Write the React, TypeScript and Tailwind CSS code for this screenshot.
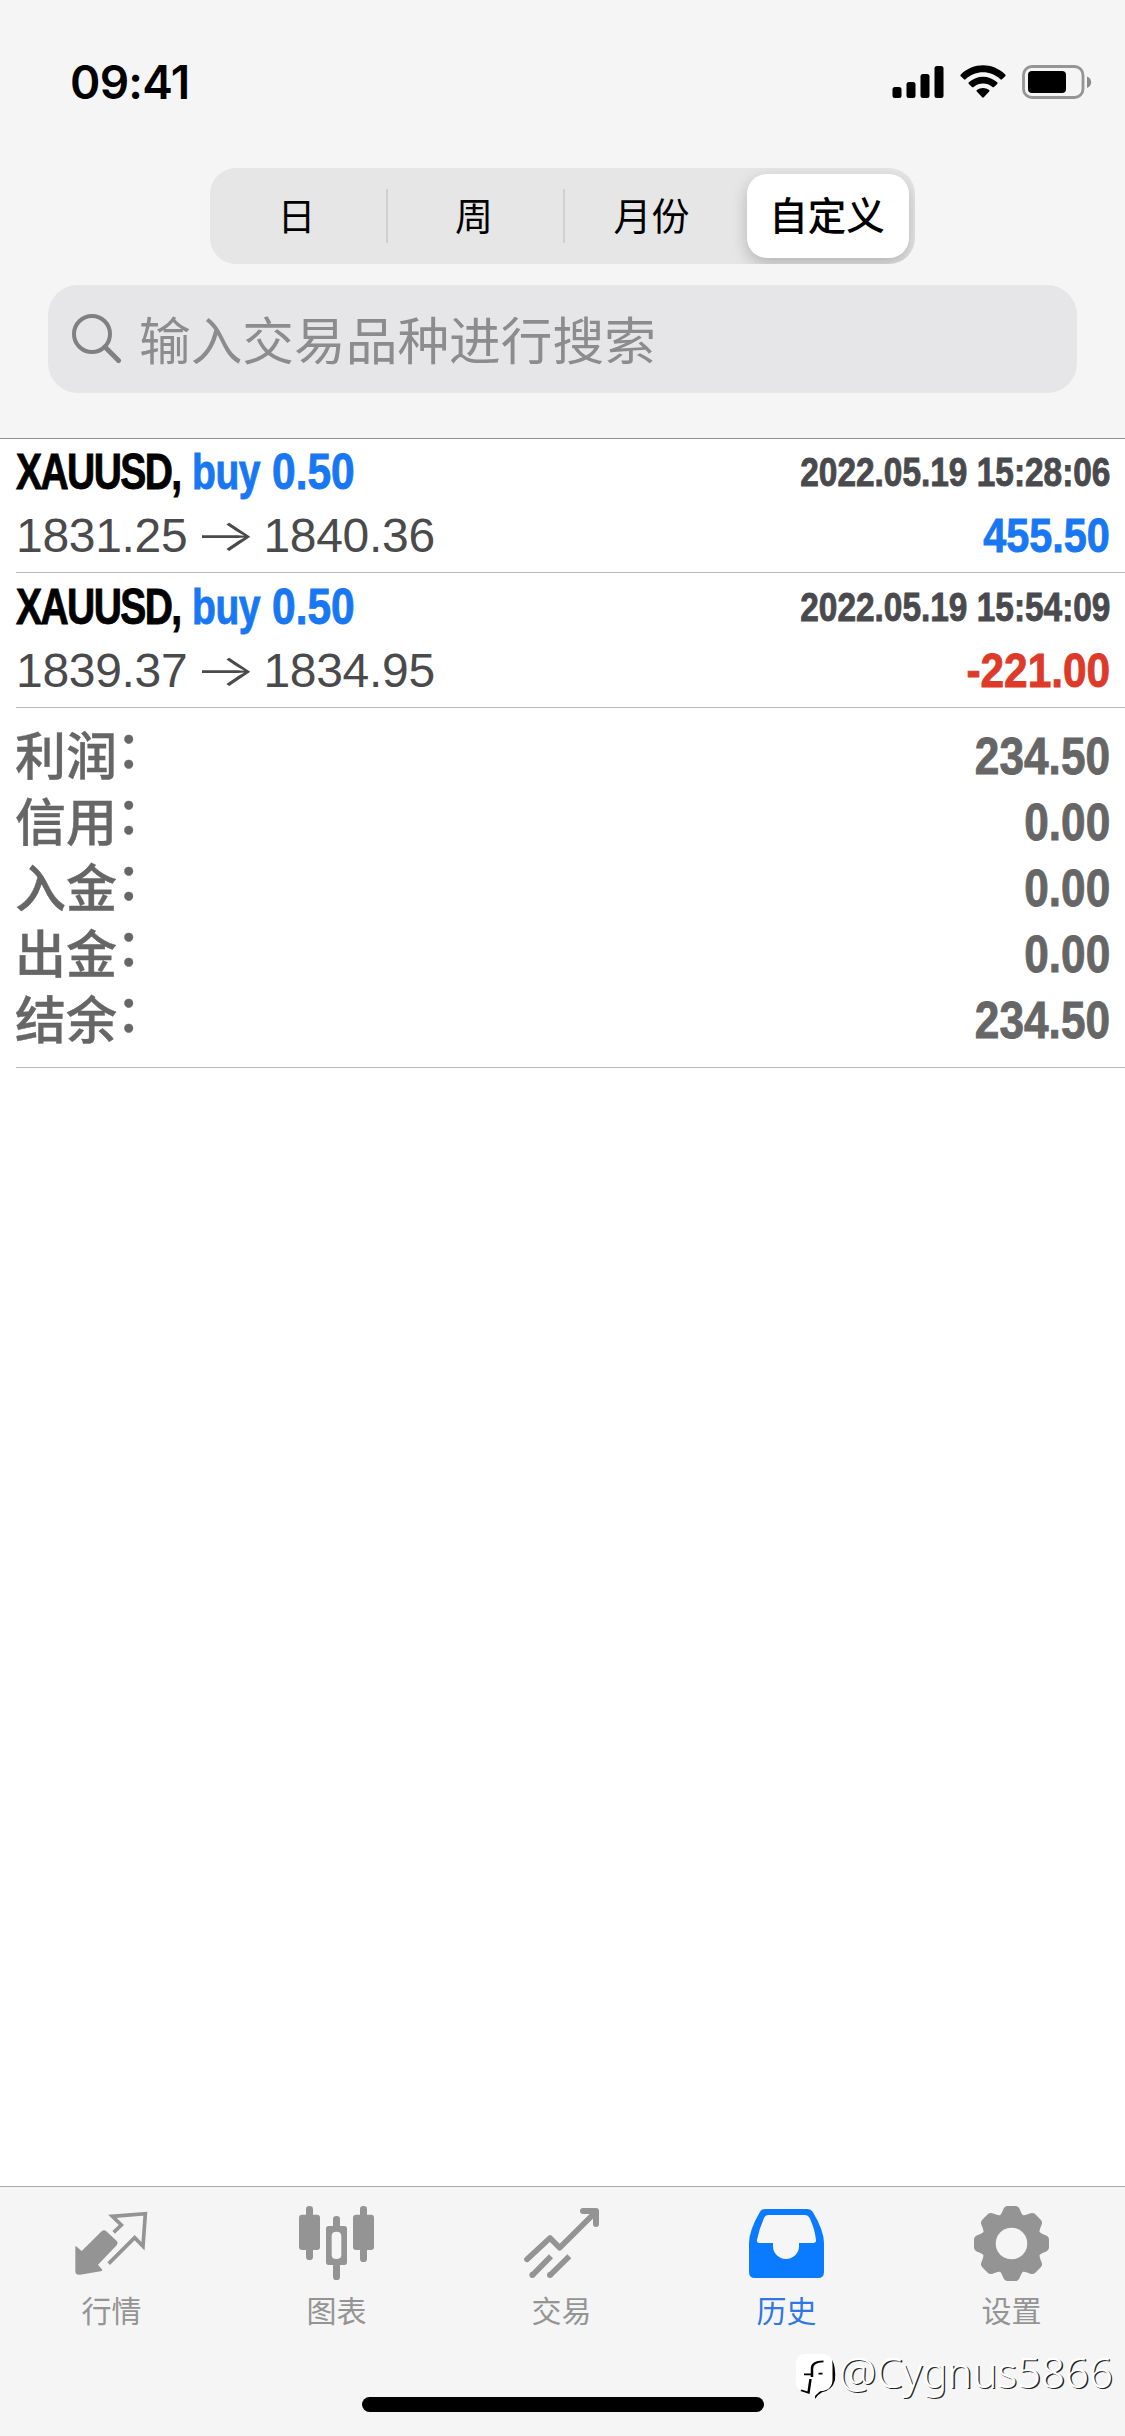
import type { ReactNode } from "react";

const segments = [
  { label: "日", box: "w-[176px]" },
  { label: "周", box: "w-[177px] border-l-2" },
  { label: "月份", box: "w-[178px] border-l-2" },
];

const deals = [
  { symbol: "XAUUSD,", side: "buy", lots: "0.50", time: "2022.05.19 15:28:06", open: "1831.25", close: "1840.36", profit: "455.50" },
  { symbol: "XAUUSD,", side: "buy", lots: "0.50", time: "2022.05.19 15:54:09", open: "1839.37", close: "1834.95", profit: "-221.00" },
];

const totals = [
  { label: "利润", value: "234.50" },
  { label: "信用", value: "0.00" },
  { label: "入金", value: "0.00" },
  { label: "出金", value: "0.00" },
  { label: "结余", value: "234.50" },
];

function StatusBar() {
  return (
    <div className="flex h-[168px] items-start justify-between pl-[70px] pr-[33px]">
      <span className="mt-[55px] font-['Inter'] text-[46px] leading-[54px] font-semibold tracking-[-0.7px] text-black">09:41</span>
      <div className="mt-[65px] flex items-start">
        <svg width="52" height="34" viewBox="0 0 52 34">
          <rect x="0.5" y="22" width="9" height="11" rx="2.5" />
          <rect x="14.5" y="17" width="9" height="16" rx="2.5" />
          <rect x="28.5" y="9" width="9" height="24" rx="2.5" />
          <rect x="42.5" y="1" width="9" height="32" rx="2.5" />
        </svg>
        <svg className="ml-[16px]" width="46" height="34" viewBox="0 0 46 34">
          <path d="M0.8 9.6C13-2.8 33-2.8 45.2 9.6Q46 10.4 45.2 11.2L42 14.3Q41.2 15 40.4 14.3C30.5 5 15.5 5 5.6 14.3Q4.8 15 4 14.3L0.8 11.2Q0 10.4 0.8 9.6Z" />
          <path d="M8.8 17.3C17 9.8 29 9.8 37.2 17.3Q38 18.1 37.2 18.9L34 22Q33.2 22.7 32.4 22C27 17.4 19 17.4 13.6 22Q12.8 22.7 12 22L8.8 18.9Q8 18.1 8.8 17.3Z" />
          <path d="M16.8 25C20.4 22.2 25.6 22.2 29.2 25Q30 25.8 29.2 26.6L23.8 32.3Q23 33 22.2 32.3L16.8 26.6Q16 25.8 16.8 25Z" />
        </svg>
        <svg className="ml-[16px]" width="70" height="34" viewBox="0 0 70 34">
          <rect x="1.5" y="1.5" width="59.5" height="31" rx="8.5" fill="none" stroke="#959595" strokeWidth="2.8" />
          <rect x="6" y="6" width="38" height="22" rx="4" />
          <path d="M65 11.5C70.5 13.5 70.5 21 65 23Z" fill="#8b8b8b" />
        </svg>
      </div>
    </div>
  );
}

function PeriodPicker() {
  return (
    <div className="ml-[210px] flex h-[96px] w-[705px] items-center overflow-hidden rounded-[26px] bg-[#e6e6e6] text-[38px] text-black">
      {segments.map((s) => (
        <div key={s.label} className={`flex h-[54px] items-center justify-center border-[#d0d0d0] pr-[3px] pb-[5px] ${s.box}`}>
          {s.label}
        </div>
      ))}
      <div className="ml-[6px] flex h-[84px] w-[162px] items-center justify-center rounded-[20px] bg-white pr-[2px] pb-[5px] text-[38.5px] font-medium shadow-[0_6px_16px_rgba(0,0,0,0.22)]">
        自定义
      </div>
    </div>
  );
}

function SearchField() {
  return (
    <div className="mx-[48px] mt-[21px] flex h-[108px] items-center rounded-[30px] bg-[#e6e6e8] pl-[24px]">
      <svg width="50" height="50" viewBox="0 0 50 50" fill="none" stroke="#808083" strokeLinecap="round">
        <circle cx="20" cy="20" r="18" strokeWidth="4" />
        <path d="M33 33L46.5 46.5" strokeWidth="5" />
      </svg>
      <span className="ml-[17px] pb-[3px] text-[51.7px] text-[#8c8c8f]">输入交易品种进行搜索</span>
    </div>
  );
}

function Condensed({ className, children }: { className: string; children: ReactNode }) {
  return (
    <span className={`inline-block font-['Liberation_Sans'] font-bold whitespace-nowrap [-webkit-text-stroke:0.9px_currentColor] ${className}`}>
      {children}
    </span>
  );
}

function DealRow({ deal }: { deal: (typeof deals)[number] }) {
  return (
    <div className="ml-[16px] h-[135px] border-b border-[#bcbcbf] pt-[2px] pr-[15px]">
      <div className="flex h-[65px] items-center justify-between">
        <div className="flex text-[50px] leading-[65px]">
          <Condensed className="w-[176px] origin-left scale-x-[0.78] tracking-[-2px] text-black">{deal.symbol}</Condensed>
          <Condensed className="w-[80px] origin-left scale-x-[0.78] tracking-[-0.5px] text-[#1877f2]">{deal.side}</Condensed>
          <Condensed className="origin-left scale-x-[0.85] text-[#1877f2]">{deal.lots}</Condensed>
        </div>
        <Condensed className="origin-right scale-x-[0.835] text-[40px] leading-[65px] text-[#4a4a4e]">{deal.time}</Condensed>
      </div>
      <div className="flex h-[61px] items-center justify-between">
        <div className="flex font-['Liberation_Sans'] text-[48px] leading-[61px] tracking-[-0.3px] text-[#4a4a4c]">
          <span>{deal.open}</span>
          <span className="inline-block w-[76px] scale-x-[1.5] text-center font-['Inter'] text-[44px] font-light">→</span>
          <span>{deal.close}</span>
        </div>
        <Condensed
          className={`origin-right text-[49px] leading-[61px] ${deal.profit.startsWith("-") ? "scale-x-[0.865] text-[#dd3a2a]" : "scale-x-[0.845] text-[#1877f2]"}`}
        >
          {deal.profit}
        </Condensed>
      </div>
    </div>
  );
}

function Totals() {
  return (
    <div className="ml-[16px] h-[360px] border-b border-[#bcbcbf] pt-[15px] pr-[15px] text-[#666666]">
      {totals.map((t) => (
        <div key={t.label} className="flex h-[66px] items-center justify-between">
          <span className="-mt-[6px] -ml-px flex text-[51px] leading-[66px] font-medium [-webkit-text-stroke:0.4px_currentColor]">
            {t.label}
            <span className="-mt-[7px] -ml-px">：</span>
          </span>
          <Condensed className="origin-right scale-x-[0.85] text-[52px] leading-[66px]">{t.value}</Condensed>
        </div>
      ))}
    </div>
  );
}

function QuotesIcon() {
  return (
    <svg width="75" height="75" viewBox="105 108 225 225" className="overflow-visible">
      <path d="M106 229Q104 227 110 230L125 243L185 184Q192 177 199 184L231 214Q236 220 230 226L174 284L187 299Q188 303 182 304L120 314Q106 316 106 303Z" fill="currentColor" />
      <path d="M221 187L244 165L217 139L316 131L309 229L284 203L206 281" fill="none" stroke="currentColor" strokeWidth="11" />
    </svg>
  );
}

function ChartIcon() {
  return (
    <svg width="75" height="75" viewBox="780 108 225 225" className="overflow-visible" fill="currentColor">
      <rect x="798" y="108" width="21" height="162" rx="10" />
      <rect x="777" y="134" width="63" height="106" rx="9" />
      <rect x="960" y="108" width="21" height="168" rx="10" />
      <rect x="939" y="134" width="63" height="106" rx="9" />
      <rect x="879" y="138" width="21" height="40" rx="10" />
      <rect x="879" y="278" width="21" height="52" rx="10" />
      <path fillRule="evenodd" d="M866 168H913Q921 168 921 176V277Q921 285 913 285H866Q858 285 858 277V176Q858 168 866 168ZM889 185Q875 185 875 198V254Q875 267 889 267Q904 267 904 254V198Q904 185 889 185Z" />
    </svg>
  );
}

function TradeIcon() {
  return (
    <svg width="75" height="75" viewBox="135 108 225 225" className="overflow-visible" fill="none" stroke="currentColor" strokeWidth="17" strokeLinejoin="round">
      <path d="M141 268L210 204L239 233L347 126" strokeLinecap="round" />
      <path d="M309 123H348V162" strokeLinecap="round" strokeWidth="18" />
      <path d="M213 259L157 316M268 259L210 316" />
      <g fill="currentColor" stroke="none">
        <circle cx="157" cy="315" r="9" />
        <circle cx="210" cy="315" r="9" />
      </g>
    </svg>
  );
}

function HistoryIcon() {
  return (
    <svg width="75" height="75" viewBox="810 108 225 225" className="overflow-visible">
      <path d="M856 117H982Q993 117 998 125Q1032 181 1032 220V306Q1032 324 1014 324H825Q807 324 807 306V220Q807 181 840 125Q845 117 856 117Z" fill="#0a7aff" />
      <path d="M864 135H974Q984 135 989 144Q1004 176 1008 209Q1009 219 999 219H957V229A39 38 0 0 1 879 229V219H838Q829 219 831 209Q838 176 852 144Q856 135 864 135Z" fill="#f6f6f6" />
    </svg>
  );
}

function SettingsIcon() {
  const teeth = [0, 45, 90, 135, 180, 225, 270, 315];
  return (
    <svg width="75" height="75" viewBox="225 108 225 225" className="overflow-visible" fill="currentColor">
      {teeth.map((a) => (
        <path key={a} d="M294 142Q303 136 309 120Q313 108 323 108H346Q356 108 360 120Q366 136 375 142Z" transform={`rotate(${a} 334.5 220.5)`} />
      ))}
      <path fillRule="evenodd" d="M334.5 132A88.5 88.5 0 1 0 334.6 132ZM334.5 173A47.5 47.5 0 1 1 334.4 173Z" />
    </svg>
  );
}

const tabs = [
  { label: "行情", icon: <QuotesIcon />, active: false },
  { label: "图表", icon: <ChartIcon />, active: false },
  { label: "交易", icon: <TradeIcon />, active: false },
  { label: "历史", icon: <HistoryIcon />, active: true },
  { label: "设置", icon: <SettingsIcon />, active: false },
];

function Watermark() {
  return (
    <div className="absolute top-[165px] left-[796px] flex items-start">
      <svg width="40" height="48" viewBox="912 66 80 144" preserveAspectRatio="none">
        <path d="M984 90Q992 110 990 150Q985 180 964 187Q955 194 950 207Q948 190 960 183Q978 178 984 155Z" fill="#000" />
        <path d="M926 72H968Q985 75 985 105V150Q984 182 960 184L948 200L940 185L934 187L920 180Q912 175 912 150V105Q912 76 926 72Z" fill="#fff" />
        <path d="M967 94Q944 94 944 116V133H928M944 133V141M957 131H965M941 147L937 188L922 181" fill="none" stroke="#000" strokeWidth="5" />
      </svg>
      <span className="-mt-[4px] ml-[3px] font-['Noto_Sans'] text-[42px] leading-[48px] font-light text-white [text-shadow:1.3px_1.3px_0.5px_#222]">@Cygnus5866</span>
    </div>
  );
}

function TabBar() {
  return (
    <nav className="relative h-[250px] border-t border-[#a8a8a8] bg-[#f5f5f5]">
      <div className="flex pt-[19px]">
        {tabs.map((t) => (
          <div key={t.label} className={`flex w-[225px] flex-col items-center ${t.active ? "text-[#2f78e4]" : "text-[#949494]"}`}>
            {t.icon}
            <span className="mt-[6px] mr-[2px] text-[30px] leading-[44px]">{t.label}</span>
          </div>
        ))}
      </div>
      <div className="mx-auto mt-[66px] h-[15px] w-[402px] rounded-full bg-black" />
      <Watermark />
    </nav>
  );
}

export default function App() {
  return (
    <div className="flex h-[2436px] w-[1125px] flex-col overflow-hidden bg-white font-['Noto_Sans_CJK_SC',sans-serif]">
      <header className="h-[439px] border-b border-[#8e8e8e] bg-[#f5f5f5]">
        <StatusBar />
        <PeriodPicker />
        <SearchField />
      </header>
      <main className="-mt-px flex-1">
        {deals.map((d) => (
          <DealRow key={d.time} deal={d} />
        ))}
        <Totals />
      </main>
      <TabBar />
    </div>
  );
}
